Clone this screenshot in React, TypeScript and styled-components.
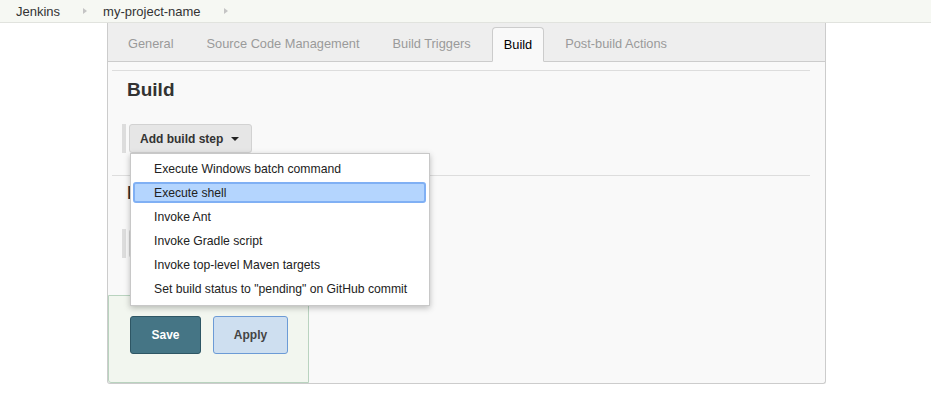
import React from 'react'
import styled, { createGlobalStyle } from 'styled-components'

const GlobalStyle = createGlobalStyle`
  html, body { margin: 0; padding: 0; background: #fff; }
  body { font-family: "Liberation Sans", Arial, sans-serif; color: #333; }
`

const Breadcrumbs = styled.nav`
  display: flex;
  align-items: center;
  height: 22px;
  padding-left: 16px;
  background: #f6f8f3;
  border-bottom: 1px solid #e1e3de;
  font-size: 13px;
  color: #333;
`

const Crumb = styled.span`
  display: inline-flex;
  align-items: center;
`

const CrumbArrow = styled.span`
  width: 0;
  height: 0;
  margin: 0 16px 0 23px;
  border-top: 3px solid transparent;
  border-bottom: 3px solid transparent;
  border-left: 4px solid #c4c4c4;
`

const Panel = styled.main`
  position: relative;
  width: 717px;
  margin-left: 107px;
  background: #f9f9f9;
  border: 1px solid #ccc;
  border-top: none;
  border-radius: 0 0 3px 3px;
  display: flex;
  flex-direction: column;
`

const TabBar = styled.div`
  display: flex;
  align-items: flex-end;
  gap: 11px;
  height: 38px;
  padding-left: 9px;
  background: #eee;
  border-bottom: 1px solid #ccc;
`

const Tab = styled.div<{ $active?: boolean }>`
  display: flex;
  align-items: center;
  height: 33px;
  padding: 0 ${(p) => (p.$active ? '11px' : '10px')};
  margin: ${(p) => (p.$active ? '0 -1px -1px' : '0')};
  font-size: 12.8px;
  color: ${(p) => (p.$active ? '#000' : '#9a9a9a')};
  background: ${(p) => (p.$active ? '#f9f9f9' : 'transparent')};
  border: 1px solid ${(p) => (p.$active ? '#ccc' : 'transparent')};
  border-bottom-color: ${(p) => (p.$active ? '#f9f9f9' : 'transparent')};
  border-radius: 4px 4px 0 0;
  box-sizing: content-box;
`

const Section = styled.section<{ $top: number }>`
  margin: ${(p) => p.$top}px 15px 0 4px;
  border-top: 1px solid #ddd;
`

const SectionTitle = styled.h2<{ $pad: number }>`
  margin: 0;
  padding: ${(p) => p.$pad}px 0 0 15px;
  font-size: 19px;
  line-height: 24px;
  font-weight: bold;
  color: #333;
`

const StepRow = styled.div<{ $top: number }>`
  position: relative;
  display: flex;
  align-items: stretch;
  gap: 3px;
  margin: ${(p) => p.$top}px 0 0 10px;
`

const StepBar = styled.div`
  width: 4px;
  background: #ddd;
`

const StepButton = styled.button`
  display: inline-flex;
  align-items: center;
  height: 29px;
  padding: 0 12px 0 10px;
  background: #e6e6e6;
  border: 1px solid #d2d2d2;
  border-radius: 3px;
  font-family: "Liberation Sans", Arial, sans-serif;
  font-size: 12px;
  font-weight: bold;
  color: #333;
`

const Caret = styled.span`
  width: 0;
  height: 0;
  margin-left: 8px;
  margin-top: 1px;
  border-left: 4px solid transparent;
  border-right: 4px solid transparent;
  border-top: 4px solid #222;
`

const Menu = styled.ul`
  position: absolute;
  top: 29px;
  left: 8px;
  z-index: 5;
  width: 298px;
  margin: 0;
  padding: 3px 0 4px;
  list-style: none;
  background: #fff;
  border: 1px solid #c8c8c8;
  box-shadow: 0 2px 6px rgba(0, 0, 0, 0.25);
`

const MenuItem = styled.li<{ $active?: boolean }>`
  display: flex;
  align-items: center;
  height: ${(p) => (p.$active ? '17px' : '24px')};
  margin: ${(p) => (p.$active ? '1px 3px 2px 2px' : '0')};
  padding-left: ${(p) => (p.$active ? '19px' : '23px')};
  font-size: 12.2px;
  color: #222;
  background: ${(p) => (p.$active ? '#b4d5fe' : 'transparent')};
  border: ${(p) => (p.$active ? '2px solid #80b0f4' : 'none')};
  border-radius: 3px;
`

const ButtonBar = styled.div`
  display: flex;
  gap: 12px;
  width: 178px;
  margin-top: 37px;
  padding: 20px 0 28px 21px;
  background: #f2f6ef;
  border: 1px solid #b9d3bf;
  border-bottom-left-radius: 3px;
`

const ActionButton = styled.button<{ $primary?: boolean }>`
  height: 38px;
  width: ${(p) => (p.$primary ? '71px' : '75px')};
  font-family: "Liberation Sans", Arial, sans-serif;
  font-size: 12px;
  font-weight: bold;
  color: ${(p) => (p.$primary ? '#fff' : '#444')};
  background: ${(p) => (p.$primary ? '#457585' : '#cedff0')};
  border: 1px solid ${(p) => (p.$primary ? '#2e5664' : '#6c9bd6')};
  border-radius: 3px;
`

const tabs = ['General', 'Source Code Management', 'Build Triggers', 'Build', 'Post-build Actions']
const steps = [
  'Execute Windows batch command',
  'Execute shell',
  'Invoke Ant',
  'Invoke Gradle script',
  'Invoke top-level Maven targets',
  'Set build status to "pending" on GitHub commit',
]

export default function App() {
  return (
    <>
      <GlobalStyle />
      <Breadcrumbs>
        <Crumb>Jenkins<CrumbArrow /></Crumb>
        <Crumb>my-project-name<CrumbArrow /></Crumb>
      </Breadcrumbs>
      <Panel>
        <TabBar>
          {tabs.map((t) => (
            <Tab key={t} $active={t === 'Build'}>{t}</Tab>
          ))}
        </TabBar>
        <Section $top={8}>
          <SectionTitle $pad={7}>Build</SectionTitle>
          <StepRow $top={22}>
            <StepBar />
            <StepButton>Add build step<Caret /></StepButton>
            <Menu>
              {steps.map((s) => (
                <MenuItem key={s} $active={s === 'Execute shell'}>{s}</MenuItem>
              ))}
            </Menu>
          </StepRow>
        </Section>
        <Section $top={22}>
          <SectionTitle $pad={5}>Post-build Actions</SectionTitle>
          <StepRow $top={24}>
            <StepBar />
            <StepButton>Add post-build action<Caret /></StepButton>
          </StepRow>
        </Section>
        <ButtonBar>
          <ActionButton $primary>Save</ActionButton>
          <ActionButton>Apply</ActionButton>
        </ButtonBar>
      </Panel>
    </>
  )
}
